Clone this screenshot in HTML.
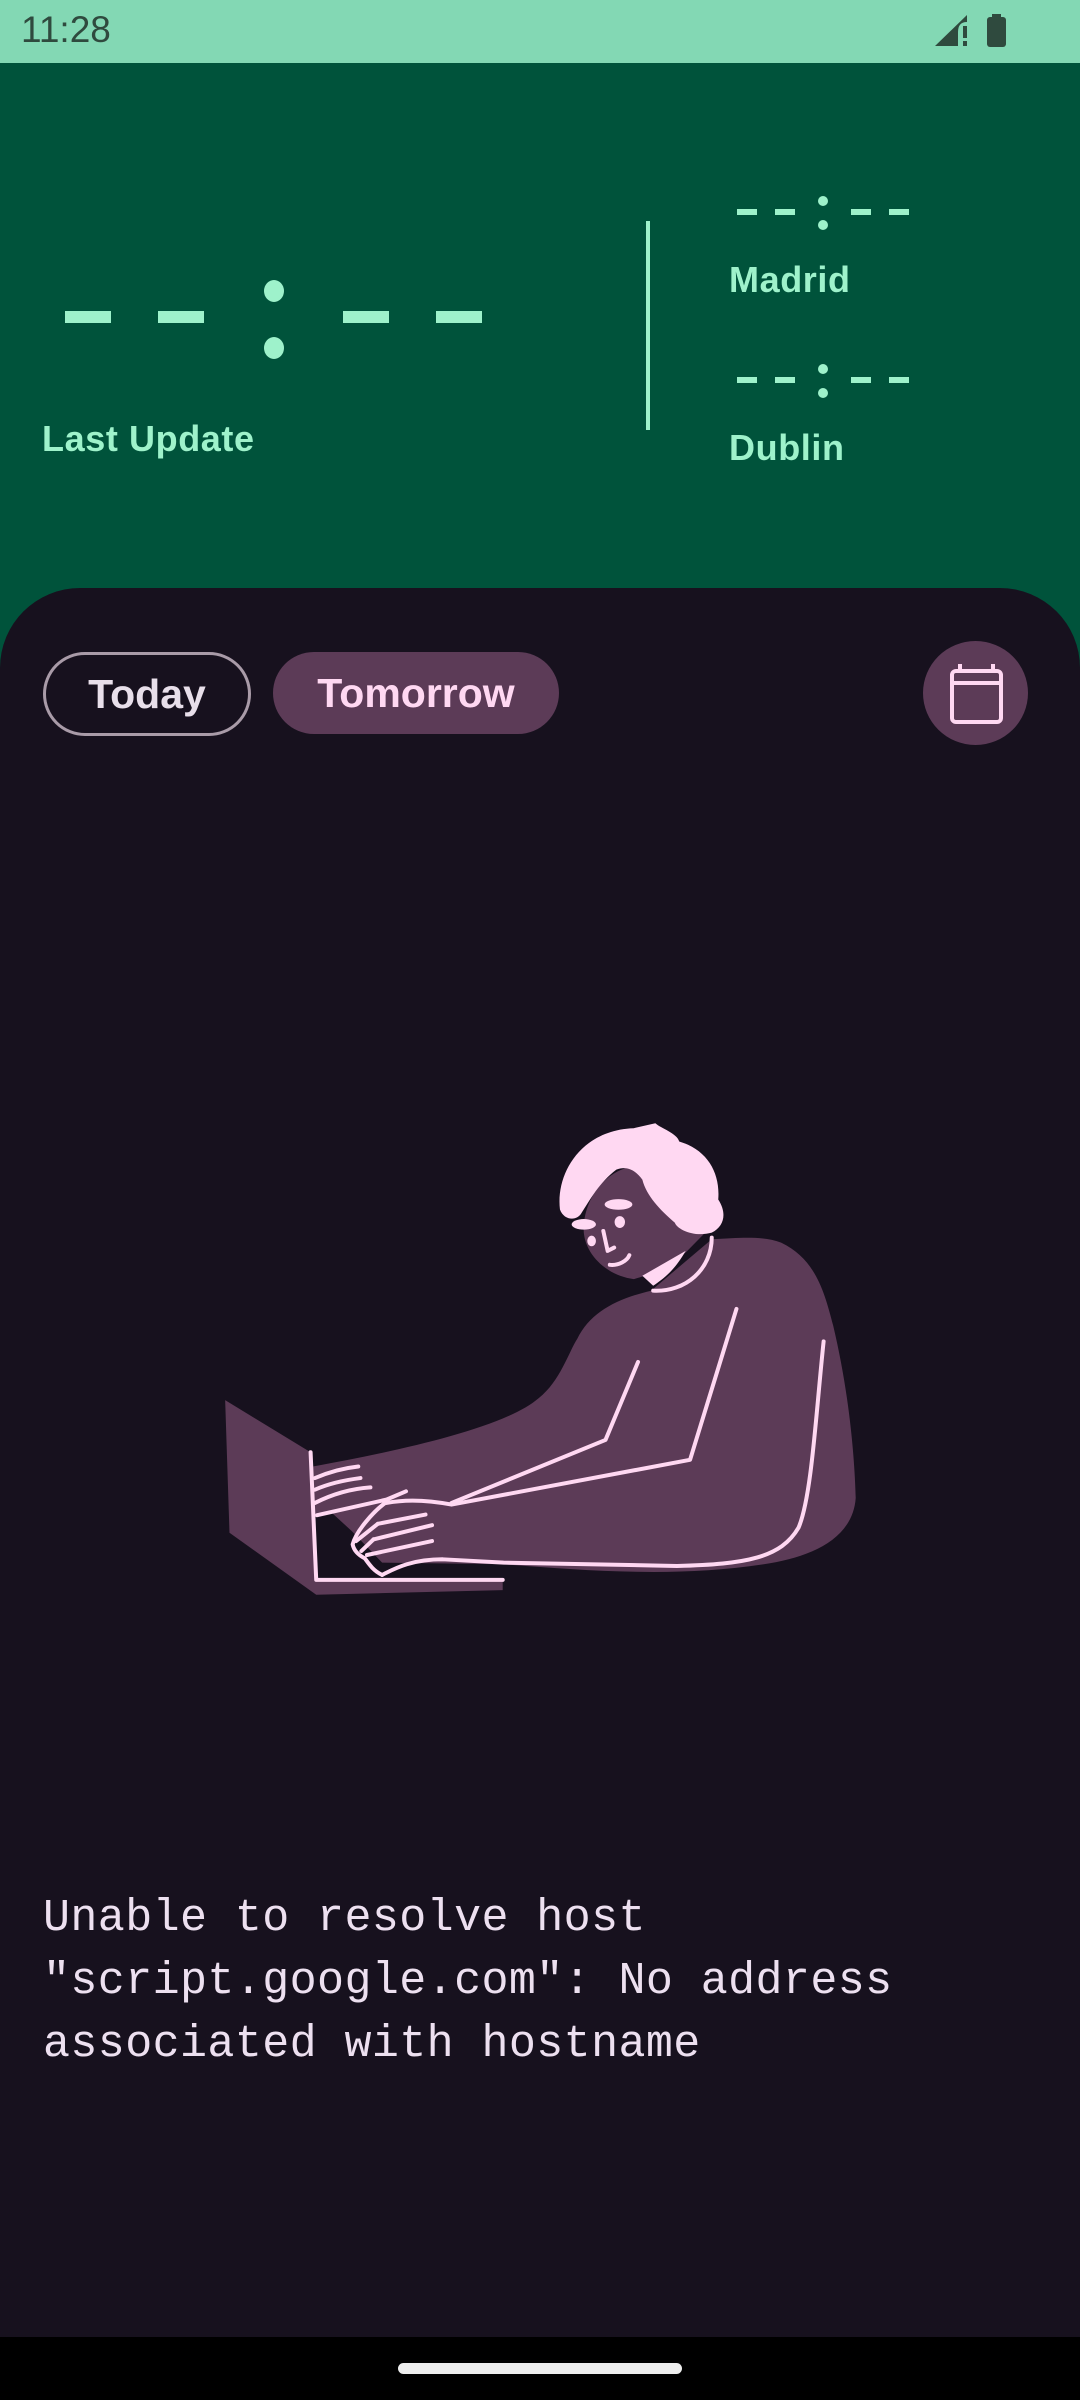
<!DOCTYPE html>
<html><head><meta charset="utf-8"><style>
html,body{margin:0;padding:0}
body{width:1080px;height:2400px;position:relative;overflow:hidden;background:#00533B;font-family:"Liberation Sans",sans-serif}
.abs{position:absolute}
.g{background:#9EF2CB}
.lbl{color:#9EF2CB;font-size:36px;font-weight:bold;letter-spacing:0.6px}
</style></head><body>
<div class="abs" style="left:0;top:0;width:1080px;height:63px;background:#83D8B4"></div>
<div class="abs" style="left:21px;top:9px;font-size:37px;color:#2F4A3E">11:28</div>
<svg class="abs" style="left:930px;top:10px" width="90" height="42" viewBox="930 10 90 42">
<path d="M935 46 L967 15 L967 22 Q958 22 958 32 L958 46 Z" fill="#2F4A3E"/>
<rect x="963" y="26" width="4" height="12" fill="#2F4A3E"/><rect x="963" y="41" width="4" height="5" fill="#2F4A3E"/>
<rect x="987" y="17" width="19" height="30" rx="3" fill="#2F4A3E"/><rect x="992" y="14" width="9" height="4" fill="#2F4A3E"/>
</svg>

<!-- big time -->
<div class="abs g" style="left:65px;top:311px;width:46px;height:12px"></div>
<div class="abs g" style="left:158px;top:311px;width:46px;height:12px"></div>
<div class="abs g" style="left:343px;top:311px;width:46px;height:12px"></div>
<div class="abs g" style="left:436px;top:311px;width:46px;height:12px"></div>
<div class="abs g" style="left:264px;top:280px;width:20px;height:22px;border-radius:50%"></div>
<div class="abs g" style="left:264px;top:337px;width:20px;height:22px;border-radius:50%"></div>
<div class="abs lbl" style="left:42px;top:418px">Last Update</div>
<div class="abs g" style="left:646px;top:221px;width:4px;height:209px"></div>

<!-- small times -->
<div class="abs g" style="left:737px;top:209px;width:20px;height:6px"></div>
<div class="abs g" style="left:775px;top:209px;width:20px;height:6px"></div>
<div class="abs g" style="left:851px;top:209px;width:20px;height:6px"></div>
<div class="abs g" style="left:889px;top:209px;width:20px;height:6px"></div>
<div class="abs g" style="left:818px;top:196px;width:10px;height:10px;border-radius:50%"></div>
<div class="abs g" style="left:818px;top:220px;width:10px;height:10px;border-radius:50%"></div>
<div class="abs lbl" style="left:729px;top:259px">Madrid</div>
<div class="abs g" style="left:737px;top:377px;width:20px;height:6px"></div>
<div class="abs g" style="left:775px;top:377px;width:20px;height:6px"></div>
<div class="abs g" style="left:851px;top:377px;width:20px;height:6px"></div>
<div class="abs g" style="left:889px;top:377px;width:20px;height:6px"></div>
<div class="abs g" style="left:818px;top:364px;width:10px;height:10px;border-radius:50%"></div>
<div class="abs g" style="left:818px;top:388px;width:10px;height:10px;border-radius:50%"></div>
<div class="abs lbl" style="left:729px;top:427px">Dublin</div>

<!-- panel -->
<div class="abs" style="left:0;top:588px;width:1080px;height:1812px;background:#17111E;border-radius:80px 80px 0 0"></div>
<div class="abs" style="left:43px;top:652px;border:3px solid #A99BA8;border-radius:42px;width:202px;height:78px;color:#E8DFEA;font-size:41px;font-weight:bold;text-align:center;line-height:78px">Today</div>
<div class="abs" style="left:273px;top:652px;width:286px;height:82px;background:#5C3B57;border-radius:42px;color:#FFD8F2;font-size:41px;font-weight:bold;text-align:center;line-height:82px">Tomorrow</div>
<div class="abs" style="left:923px;top:641px;width:105px;height:104px;border-radius:50%;background:#5C3B57"></div>
<svg class="abs" style="left:923px;top:641px" width="105" height="104" viewBox="923 641 105 104">
<rect x="952" y="671" width="49" height="51" rx="4" fill="none" stroke="#FFD8F2" stroke-width="4"/>
<line x1="952" y1="683" x2="1001" y2="683" stroke="#FFD8F2" stroke-width="4"/>
<line x1="960" y1="664" x2="960" y2="672" stroke="#FFD8F2" stroke-width="4"/>
<line x1="993" y1="664" x2="993" y2="672" stroke="#FFD8F2" stroke-width="4"/>
</svg>

<!-- illustration -->
<svg class="abs" style="left:200px;top:1100px" width="680" height="520" viewBox="0 0 1568 1568" preserveAspectRatio="none">
<g fill="#5C3B57">
<polygon points="58,905 255,1062 268,1450 698,1445 698,1478 268,1492 68,1305"/>
<path d="M260,1105 C450,1060 700,990 780,900 C830,850 850,760 870,720 C900,640 960,600 1040,575 L1180,420 C1250,415 1300,410 1340,430 C1420,480 1440,580 1460,680 C1500,900 1510,1100 1512,1200 C1505,1330 1400,1380 1300,1400 C1100,1440 900,1420 700,1400 L420,1395 L350,1300 L300,1240 L265,1250 Z"/>
<path d="M885,400 C880,300 940,200 1010,200 C1100,210 1170,280 1180,380 L1120,460 C1070,510 1030,530 1000,540 C940,530 890,470 885,400 Z"/>
</g>
<path d="M1020,530 L1120,455 C1100,500 1080,530 1045,560 Z" fill="#FFD8F2"/>
<path d="M830,330 C820,220 880,90 1000,85 L1050,70 C1062,85 1100,100 1105,125 C1170,150 1200,220 1195,300 C1215,340 1210,380 1180,400 C1140,415 1100,390 1095,370 C1060,330 1030,290 1020,240 C1000,205 980,200 960,210 C920,250 900,300 880,340 C870,365 840,365 830,330 Z" fill="#FFD8F2"/>
<ellipse cx="965" cy="315" rx="32" ry="16" fill="#FFD8F2"/>
<ellipse cx="885" cy="375" rx="28" ry="16" fill="#FFD8F2"/>
<ellipse cx="968" cy="368" rx="12" ry="18" fill="#FFD8F2"/>
<ellipse cx="903" cy="425" rx="10" ry="16" fill="#FFD8F2"/>
<g fill="none" stroke="#FFD8F2" stroke-width="4" stroke-linecap="round" stroke-linejoin="round">
<path d="M930,395 L940,455 L955,445" vector-effect="non-scaling-stroke"/>
<path d="M945,497 C965,500 985,485 990,468" vector-effect="non-scaling-stroke"/>
<path d="M1085,300 C1085,265 1125,260 1130,300 C1132,330 1115,345 1100,350" vector-effect="non-scaling-stroke"/>
<path d="M1045,575 C1120,580 1180,510 1180,415" vector-effect="non-scaling-stroke"/>
<path d="M1010,790 L935,1025 L580,1215" vector-effect="non-scaling-stroke"/>
<path d="M1237,630 L1130,1085 L580,1220 C500,1200 450,1210 430,1215" vector-effect="non-scaling-stroke"/>
<path d="M1438,728 C1420,950 1410,1200 1380,1290 C1340,1380 1260,1400 1100,1405 L700,1395 L560,1385 C480,1385 440,1420 420,1432" vector-effect="non-scaling-stroke"/>
<path d="M255,1062 L268,1447 L698,1447" vector-effect="non-scaling-stroke"/>
<path d="M265,1140 C300,1120 330,1110 365,1105" vector-effect="non-scaling-stroke"/>
<path d="M265,1175 C300,1155 340,1145 370,1140" vector-effect="non-scaling-stroke"/>
<path d="M265,1215 C310,1185 350,1172 393,1168" vector-effect="non-scaling-stroke"/>
<path d="M270,1252 L430,1205 L475,1180" vector-effect="non-scaling-stroke"/>
<path d="M430,1212 C400,1240 360,1300 352,1340 C355,1360 365,1372 380,1382 C390,1400 400,1420 420,1432" vector-effect="non-scaling-stroke"/>
<path d="M410,1278 L520,1250" vector-effect="non-scaling-stroke"/>
<path d="M400,1325 L535,1282" vector-effect="non-scaling-stroke"/>
<path d="M385,1372 L535,1330" vector-effect="non-scaling-stroke"/>
<path d="M360,1330 L410,1278 M372,1360 L400,1325" vector-effect="non-scaling-stroke"/>
</g>
</svg>

<div class="abs" style="left:43px;top:1887px;font-family:'Liberation Mono',monospace;font-size:45px;letter-spacing:0.4px;line-height:63px;color:#EDE0F0;white-space:pre">Unable to resolve host
"script.google.com": No address
associated with hostname</div>

<div class="abs" style="left:0;top:2337px;width:1080px;height:63px;background:#000"></div>
<div class="abs" style="left:398px;top:2363px;width:284px;height:11px;border-radius:6px;background:#EEEEEE"></div>
</body></html>
